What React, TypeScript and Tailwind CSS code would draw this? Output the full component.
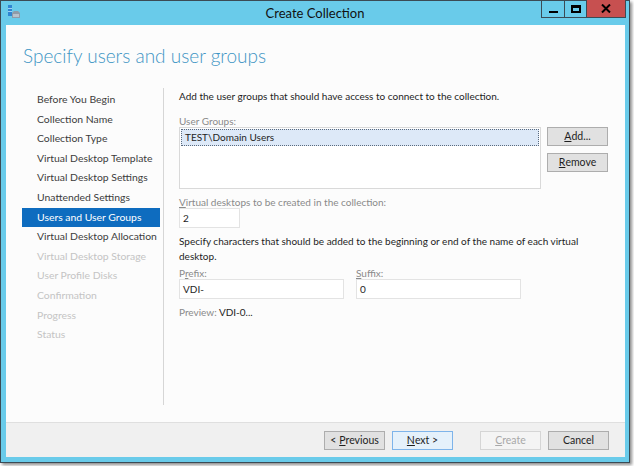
import React from 'react'

const navItems = [
  { label: 'Before You Begin', state: 'done' },
  { label: 'Collection Name', state: 'done' },
  { label: 'Collection Type', state: 'done' },
  { label: 'Virtual Desktop Template', state: 'done' },
  { label: 'Virtual Desktop Settings', state: 'done' },
  { label: 'Unattended Settings', state: 'done' },
  { label: 'Users and User Groups', state: 'active' },
  { label: 'Virtual Desktop Allocation', state: 'done' },
  { label: 'Virtual Desktop Storage', state: 'off' },
  { label: 'User Profile Disks', state: 'off' },
  { label: 'Confirmation', state: 'off' },
  { label: 'Progress', state: 'off' },
  { label: 'Status', state: 'off' },
]

function Btn({ children, variant = 'normal' }: { children: React.ReactNode; variant?: 'normal' | 'default' | 'disabled' }) {
  const cls =
    variant === 'default'
      ? 'bg-[#e5f1fb] border-[#7eb4ea] text-[#1e1e1e]'
      : variant === 'disabled'
        ? 'bg-[#f4f4f4] border-[#d5d5d5] text-[#a8a8a8]'
        : 'bg-[#e1e1e1] border-[#adadad] text-[#1e1e1e]'
  return (
    <div className={`w-[61px] h-[19px] border flex items-center justify-center text-[10.5px] leading-none ${cls}`}>
      {children}
    </div>
  )
}

function WinIcon() {
  return (
    <svg width="14" height="14" viewBox="0 0 14 14">
      <rect x="1" y="0" width="4" height="11" fill="#2f86d1" />
      <rect x="1" y="3" width="4" height="1" fill="#9fd0f5" />
      <rect x="1" y="6" width="4" height="1" fill="#9fd0f5" />
      <path d="M5 8 L7 6 L11 6 L13 8 L13 13 L5 13 Z" fill="#8f9ba8" />
      <rect x="6" y="9" width="6" height="3" fill="#b7c2cc" />
    </svg>
  )
}

export default function App() {
  return (
    <div className="w-[634px] h-[466px] bg-white font-['Lato',sans-serif] text-[10px] text-[#1e1e1e]">
      <div className="w-[630px] h-[463px] border border-[#3b4b55] bg-[#69cbea] flex flex-col shadow-[2px_2px_3px_rgba(0,0,0,0.45)]">
        {/* title bar */}
        <div className="h-[24px] relative flex items-center justify-center">
          <div className="absolute left-[6px] top-[4px]">
            <WinIcon />
          </div>
          <span className="text-[13px] text-[#111] leading-none">Create Collection</span>
          <div className="absolute right-[3px] top-[-1px] flex h-[18px] border border-[#3b4b55] border-t-0">
            <div className="w-[23px] h-full flex items-end justify-center pb-[4px] border-r border-[#3b4b55]">
              <div className="w-[9px] h-[2px] bg-black" />
            </div>
            <div className="w-[22px] h-full flex items-center justify-center border-r border-[#3b4b55]">
              <div className="w-[10px] h-[8px] border-2 border-t-[3px] border-black" />
            </div>
            <div className="w-[38px] h-full bg-[#c75050] flex items-center justify-center">
              <svg width="10" height="9" viewBox="0 0 10 9">
                <path d="M1 0.5 L9 8.5 M9 0.5 L1 8.5" stroke="#000" strokeWidth="2" />
              </svg>
            </div>
          </div>
        </div>

        {/* client */}
        <div className="flex-1 mb-[5px] ml-[5px] mr-[4px] bg-[#fcfcfc] flex flex-col">
          <div className="h-[60px] pl-[17px] pt-[18px]">
            <h1 className="text-[19px] font-light leading-[26px] text-[#3e95c4]">Specify users and user groups</h1>
          </div>

          <div className="flex-1 flex">
            {/* nav */}
            <div className="w-[157px] pl-[16px] pt-[5px] flex flex-col text-[10.4px]">
              {navItems.map((item) => (
                <div
                  key={item.label}
                  className={`h-[19.6px] w-[138px] pl-[15px] flex items-center whitespace-nowrap ${
                    item.state === 'active'
                      ? 'bg-[#0e6cbf] text-white'
                      : item.state === 'off'
                        ? 'text-[#c4c4c4]'
                        : 'text-[#3c3c3c]'
                  }`}
                >
                  {item.label}
                </div>
              ))}
            </div>
            <div className="w-px bg-[#d6d6d6] mt-[3px] h-[317px]" />

            {/* content */}
            <div className="flex-1 pl-[15px] pt-[3px] flex flex-col">
              <div className="leading-[16px]">Add the user groups that should have access to connect to the collection.</div>

              <div className="mt-[9px] leading-[16px] text-[#8a8a8a]">User Groups:</div>
              <div className="flex gap-[6px] mt-[-2px]">
                <div className="w-[362px] h-[62px] border border-[#d9d9d9] bg-white p-[1px]">
                  <div className="h-[17px] bg-[#dde9f8] border border-dotted border-[#5a6a7e] pl-[3px] flex items-center">
                    TEST\Domain Users
                  </div>
                </div>
                <div className="flex flex-col gap-[7px]">
                  <Btn>
                    <span className="underline">A</span>dd...
                  </Btn>
                  <Btn>
                    <span className="underline">R</span>emove
                  </Btn>
                </div>
              </div>

              <div className="mt-[5px] leading-[16px] text-[#8a8a8a]">
                <span className="underline">V</span>irtual desktops to be created in the collection:
              </div>
              <div className="mt-[-2px] w-[61px] h-[20px] border border-[#e3e3e3] bg-white pl-[3px] flex items-center">2</div>

              <div className="mt-[6px] leading-[15px]">
                Specify characters that should be added to the beginning or end of the name of each virtual
                <br />
                desktop.
              </div>

              <div className="flex gap-[12px] mt-[1px]">
                <div className="flex flex-col">
                  <div className="leading-[16px] text-[#8a8a8a]">
                    P<span className="underline">r</span>efix:
                  </div>
                  <div className="mt-[-2px] w-[165px] h-[20px] border border-[#e3e3e3] bg-white pl-[3px] flex items-center">VDI-</div>
                </div>
                <div className="flex flex-col">
                  <div className="leading-[16px] text-[#8a8a8a]">
                    <span className="underline">S</span>uffix:
                  </div>
                  <div className="mt-[-2px] w-[165px] h-[20px] border border-[#e3e3e3] bg-white pl-[3px] flex items-center">0</div>
                </div>
              </div>

              <div className="mt-[5px] leading-[16px]">
                <span className="text-[#8a8a8a]">Preview: </span>VDI-0...
              </div>
            </div>
          </div>

          {/* footer */}
          <div className="h-[35px] bg-[#f0f0f0] border-t border-[#dfdfdf] flex items-center justify-end pr-[16px]">
            <Btn>
              &lt; <span className="underline ml-[3px]">P</span>revious
            </Btn>
            <div className="w-[7px]" />
            <Btn variant="default">
              <span className="underline">N</span>ext &gt;
            </Btn>
            <div className="w-[27px]" />
            <Btn variant="disabled">
              <span className="underline">C</span>reate
            </Btn>
            <div className="w-[7px]" />
            <Btn>Cancel</Btn>
          </div>
        </div>
      </div>
    </div>
  )
}
